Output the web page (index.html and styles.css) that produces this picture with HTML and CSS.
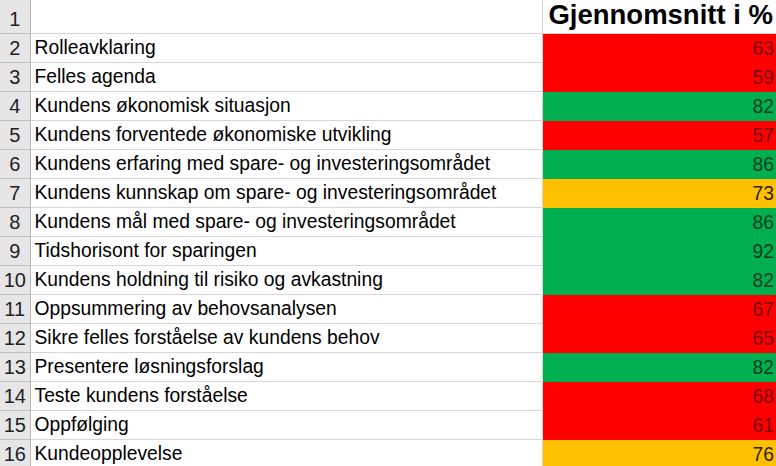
FILE: index.html
```html
<!DOCTYPE html>
<html lang="no">
<head>
<meta charset="utf-8">
<title>Gjennomsnitt</title>
<link rel="stylesheet" href="styles.css">
</head>
<body>
<table class="sheet">
  <tr class="row-head">
    <td class="rh">1</td>
    <td class="lbl"></td>
    <td class="hdr">Gjennomsnitt i %</td>
  </tr>
  <tr><td class="rh">2</td><td class="lbl">Rolleavklaring</td><td class="val red">63</td></tr>
  <tr><td class="rh">3</td><td class="lbl">Felles agenda</td><td class="val red">59</td></tr>
  <tr><td class="rh">4</td><td class="lbl">Kundens økonomisk situasjon</td><td class="val green">82</td></tr>
  <tr><td class="rh">5</td><td class="lbl">Kundens forventede økonomiske utvikling</td><td class="val red">57</td></tr>
  <tr><td class="rh">6</td><td class="lbl">Kundens erfaring med spare- og investeringsområdet</td><td class="val green">86</td></tr>
  <tr><td class="rh">7</td><td class="lbl">Kundens kunnskap om spare- og investeringsområdet</td><td class="val yellow">73</td></tr>
  <tr><td class="rh">8</td><td class="lbl">Kundens mål med spare- og investeringsområdet</td><td class="val green">86</td></tr>
  <tr><td class="rh">9</td><td class="lbl">Tidshorisont for sparingen</td><td class="val green">92</td></tr>
  <tr><td class="rh">10</td><td class="lbl">Kundens holdning til risiko og avkastning</td><td class="val green">82</td></tr>
  <tr><td class="rh">11</td><td class="lbl">Oppsummering av behovsanalysen</td><td class="val red">67</td></tr>
  <tr><td class="rh">12</td><td class="lbl">Sikre felles forståelse av kundens behov</td><td class="val red">65</td></tr>
  <tr><td class="rh">13</td><td class="lbl">Presentere løsningsforslag</td><td class="val green">82</td></tr>
  <tr><td class="rh">14</td><td class="lbl">Teste kundens forståelse</td><td class="val red">68</td></tr>
  <tr><td class="rh">15</td><td class="lbl">Oppfølging</td><td class="val red">61</td></tr>
  <tr><td class="rh">16</td><td class="lbl">Kundeopplevelse</td><td class="val yellow">76</td></tr>
</table>
</body>
</html>
```
FILE: styles.css
```css
html, body {
  margin: 0;
  padding: 0;
  background: #ffffff;
}
body {
  font-family: "Liberation Sans", Arial, sans-serif;
  color: #000;
  overflow: hidden;
}
.sheet {
  border-collapse: collapse;
  table-layout: fixed;
  width: 777px;
}
.sheet td {
  height: 29px;
  padding: 0;
  border-bottom: 1px solid #d6d6d6;
  vertical-align: bottom;
  white-space: nowrap;
  overflow: hidden;
  box-sizing: border-box;
}
.sheet tr.row-head td {
  height: 33px;
}
.rh {
  width: 30px;
  background: #e6e6e6;
  border-right: 1px solid #b9b9b9;
  border-bottom-color: #bdbdbd !important;
  text-align: center;
  font-size: 20px;
  line-height: 24px;
  color: #222;
  padding-bottom: 2px !important;
}
.lbl {
  width: 512px;
  border-right: 1px solid #d6d6d6;
  padding-left: 4px !important;
  font-size: 19.3px;
  line-height: 24px;
  padding-bottom: 2px !important;
}
.hdr {
  text-align: right;
  font-weight: bold;
  font-size: 27.5px;
  line-height: 30px;
  padding-right: 4px !important;
  padding-bottom: 3px !important;
}
.val {
  text-align: right;
  font-size: 19.3px;
  line-height: 24px;
  padding-right: 3px !important;
  padding-bottom: 2px !important;
  border-bottom: none !important;
}
.red { background: #ff0000; color: #7a0606; }
.green { background: #00b050; color: #0b3d1a; }
.yellow { background: #ffc000; color: #2e2200; }
```
